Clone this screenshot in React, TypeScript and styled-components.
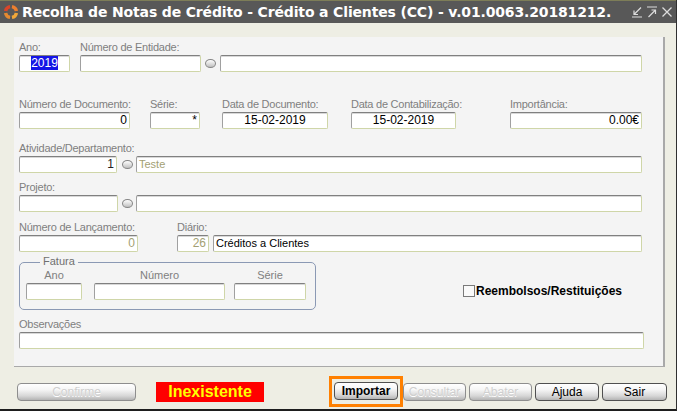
import React from 'react';
import styled, { createGlobalStyle } from 'styled-components';

const Global = createGlobalStyle`
  html, body { margin: 0; padding: 0; background: #ffffff; }
  body { font-family: "Liberation Sans", Arial, sans-serif; }
`;

const Window = styled.div`
  width: 677px;
  height: 411px;
  box-sizing: border-box;
  background: #eeeee4;
  border-right: 1px solid #303030;
  border-bottom: 2px solid #1e1e1e;
  display: flex;
  flex-direction: column;
  overflow: hidden;
`;

const TitleBar = styled.div`
  height: 23px;
  flex: none;
  box-sizing: border-box;
  background: #585858;
  border-top: 1px solid #7d7d58;
  display: flex;
  align-items: center;
  padding: 0 3px 0 3px;
`;

const TitleText = styled.div`
  font-family: "DejaVu Sans", Verdana, sans-serif;
  font-weight: bold;
  font-size: 14px;
  color: #ffffff;
  margin-left: 3px;
  white-space: nowrap;
  flex: 1;
  letter-spacing: -0.15px;
`;

const Controls = styled.div`
  display: flex;
  gap: 3px;
  align-items: center;
`;

const CtrlIcon = styled.svg`
  width: 12px;
  height: 12px;
  display: block;
`;

const Panel = styled.div`
  margin: 14px 0 0 14px;
  width: 651px;
  height: 330px;
  flex: none;
  box-sizing: border-box;
  background: #f4f4f4;
  border-right: 2px solid #a9a9a9;
  border-bottom: 1px solid #a9a9a9;
  padding: 4px 0 0 5px;
  display: flex;
  flex-direction: column;
`;

const Row = styled.div<{ $mt?: number }>`
  display: flex;
  align-items: flex-end;
  margin-top: ${(p) => p.$mt ?? 0}px;
`;

const Field = styled.div<{ $ml?: number }>`
  display: flex;
  flex-direction: column;
  margin-left: ${(p) => p.$ml ?? 0}px;
`;

const Label = styled.div`
  width: 0;
  height: 14px;
  line-height: 13px;
  font-size: 11px;
  color: #7f7f7f;
  letter-spacing: -0.25px;
  white-space: nowrap;
  overflow: visible;
`;

const Box = styled.div<{ $w: number; $align?: string; $color?: string; $ml?: number; $size?: number }>`
  width: ${(p) => p.$w}px;
  height: 17px;
  margin-left: ${(p) => p.$ml ?? 0}px;
  box-sizing: border-box;
  background: #ffffff;
  border: 1px solid;
  border-color: #808080 #cfd6a8 #cfd6a8 #a0a0a0;
  box-shadow: inset 0 1px 0 #d8d8d8;
  border-radius: 2px;
  font-size: ${(p) => p.$size ?? 11}px;
  line-height: 15px;
  padding: 0 2px;
  text-align: ${(p) => p.$align ?? 'left'};
  color: ${(p) => p.$color ?? '#000000'};
  overflow: hidden;
  white-space: nowrap;
  flex: none;
`;

const Selected = styled.span`
  background: #1414e6;
  color: #ffffff;
`;

const Lookup = styled.div<{ $ml: number; $mr: number }>`
  width: 11px;
  height: 9px;
  box-sizing: border-box;
  border-radius: 50%;
  border: 1px solid #858585;
  background: linear-gradient(to bottom, #ffffff, #c0c0c0);
  margin: 0 ${(p) => p.$mr}px 4px ${(p) => p.$ml}px;
  flex: none;
`;

const FaturaBox = styled.div`
  position: relative;
  width: 297px;
  height: 48px;
  box-sizing: border-box;
  border: 1px solid #8b99b4;
  border-radius: 5px;
  padding: 6px 0 0 6px;
  display: flex;
  align-self: flex-start;
  flex: none;
`;

const Legend = styled.div`
  position: absolute;
  left: 20px;
  top: -8px;
  padding: 0 3px;
  background: #f4f4f4;
  font-size: 11px;
  line-height: 13px;
  color: #707070;
`;

const FatCol = styled.div<{ $ml?: number }>`
  display: flex;
  flex-direction: column;
  align-items: center;
  margin-left: ${(p) => p.$ml ?? 0}px;
`;

const FatLabel = styled.div`
  height: 14px;
  line-height: 13px;
  font-size: 11px;
  color: #808080;
  text-align: center;
  white-space: nowrap;
`;

const CheckWrap = styled.div`
  display: flex;
  align-items: center;
  align-self: flex-start;
  margin: 22px 0 0 147px;
`;

const CheckBox = styled.div`
  width: 12px;
  height: 12px;
  box-sizing: border-box;
  border: 1px solid #7a7a7a;
  background: #fafafa;
  flex: none;
`;

const CheckText = styled.div`
  font-size: 12px;
  font-weight: bold;
  color: #000000;
  margin-left: 1px;
  white-space: nowrap;
`;

const ButtonRow = styled.div`
  display: flex;
  align-items: center;
  height: 31px;
  margin-top: 9px;
  padding-left: 17px;
`;

const Button = styled.div<{ $w: number; $ml?: number; $disabled?: boolean; $bold?: boolean }>`
  width: ${(p) => p.$w}px;
  height: 18px;
  margin-left: ${(p) => p.$ml ?? 0}px;
  box-sizing: border-box;
  flex: none;
  border: 1px solid ${(p) => (p.$disabled ? '#8e8e8e' : '#505050')};
  border-radius: 4px;
  background: linear-gradient(to bottom, #ffffff 0%, #f6f6f6 35%, #d6d6d6 75%, #b4b4b4 100%);
  font-size: 12px;
  line-height: 16px;
  text-align: center;
  font-weight: ${(p) => (p.$bold ? 'bold' : 'normal')};
  color: ${(p) => (p.$disabled ? '#cfcfcf' : '#000000')};
  text-shadow: ${(p) => (p.$disabled ? '0 1px 0 #ffffff' : 'none')};
`;

const Status = styled.div`
  width: 108px;
  height: 20px;
  margin-left: 20px;
  background: #ff0000;
  color: #ffff00;
  font-weight: bold;
  font-size: 16px;
  line-height: 20px;
  text-align: center;
  flex: none;
`;

const Highlight = styled.div`
  width: 74px;
  height: 31px;
  margin-left: 65px;
  box-sizing: border-box;
  border: 3px solid #ff8000;
  padding: 3px 2px 0 2px;
  flex: none;
`;

const AppIcon = () => (
  <svg width="16" height="16" viewBox="0 0 16 16" style={{ display: 'block', flex: 'none' }}>
    <g fill="none" strokeWidth="3.4" strokeLinecap="butt">
      <path d="M7.04 2.58 A5.5 5.5 0 0 0 2.58 7.04" stroke="#d9452a" />
      <path d="M8.96 2.58 A5.5 5.5 0 0 1 13.42 7.04" stroke="#ec7f2e" />
      <path d="M13.42 8.96 A5.5 5.5 0 0 1 8.96 13.42" stroke="#f1a83a" />
      <path d="M7.04 13.42 A5.5 5.5 0 0 1 2.58 8.96" stroke="#e58a30" />
    </g>
  </svg>
);

const G = '#dcdcdc';

export default function App() {
  return (
    <>
      <Global />
      <Window>
        <TitleBar>
          <AppIcon />
          <TitleText>Recolha de Notas de Crédito - Crédito a Clientes (CC) - v.01.0063.20181212.</TitleText>
          <Controls>
            <CtrlIcon viewBox="0 0 12 12">
              <path d="M10 1.5 L3 8.5 M3 4.5 V8.5 H7 M1 11 H11" stroke={G} strokeWidth="1.2" fill="none" />
            </CtrlIcon>
            <CtrlIcon viewBox="0 0 12 12">
              <path d="M1 1 H11 M2.5 11 L9.5 4 M5.5 4 H9.5 V8" stroke={G} strokeWidth="1.2" fill="none" />
            </CtrlIcon>
            <CtrlIcon viewBox="0 0 12 12">
              <path d="M1.5 1.5 L10.5 10.5 M10.5 1.5 L1.5 10.5" stroke={G} strokeWidth="1.3" fill="none" />
            </CtrlIcon>
          </Controls>
        </TitleBar>

        <Panel>
          <Row>
            <Field>
              <Label>Ano:</Label>
              <Box $w={51} $align="center" $size={12}>
                <Selected>2019</Selected>
              </Box>
            </Field>
            <Field $ml={10}>
              <Label>Número de Entidade:</Label>
              <Box $w={121} />
            </Field>
            <Lookup $ml={4} $mr={4} />
            <Box $w={422} />
          </Row>

          <Row $mt={26}>
            <Field>
              <Label>Número de Documento:</Label>
              <Box $w={111} $align="right" $size={12}>0</Box>
            </Field>
            <Field $ml={20}>
              <Label>Série:</Label>
              <Box $w={50} $align="right" $size={12}>*</Box>
            </Field>
            <Field $ml={22}>
              <Label>Data de Documento:</Label>
              <Box $w={106} $align="center" $size={12}>15-02-2019</Box>
            </Field>
            <Field $ml={23}>
              <Label>Data de Contabilização:</Label>
              <Box $w={105} $align="center" $size={12}>15-02-2019</Box>
            </Field>
            <Field $ml={54}>
              <Label>Importância:</Label>
              <Box $w={132} $align="right" $size={12}>0.00€</Box>
            </Field>
          </Row>

          <Row $mt={13}>
            <Field>
              <Label>Atividade/Departamento:</Label>
              <Box $w={98} $align="right" $size={12} $color="#222222">1</Box>
            </Field>
            <Lookup $ml={5} $mr={3} />
            <Box $w={506} $color="#a39f74">Teste</Box>
          </Row>

          <Row $mt={8}>
            <Field>
              <Label>Projeto:</Label>
              <Box $w={99} />
            </Field>
            <Lookup $ml={4} $mr={3} />
            <Box $w={506} />
          </Row>

          <Row $mt={9}>
            <Field>
              <Label>Número de Lançamento:</Label>
              <Box $w={119} $align="right" $size={12} $color="#a39f74">0</Box>
            </Field>
            <Field $ml={39}>
              <Label>Diário:</Label>
              <Box $w={32} $align="right" $size={12} $color="#a39f74">26</Box>
            </Field>
            <Box $w={429} $ml={4}>Créditos a Clientes</Box>
          </Row>

          <Row $mt={10}>
            <FaturaBox>
              <Legend>Fatura</Legend>
              <FatCol>
                <FatLabel>Ano</FatLabel>
                <Box $w={56} />
              </FatCol>
              <FatCol $ml={12}>
                <FatLabel>Número</FatLabel>
                <Box $w={131} />
              </FatCol>
              <FatCol $ml={9}>
                <FatLabel>Série</FatLabel>
                <Box $w={72} />
              </FatCol>
            </FaturaBox>
            <CheckWrap>
              <CheckBox />
              <CheckText>Reembolsos/Restituições</CheckText>
            </CheckWrap>
          </Row>

          <Row $mt={8}>
            <Field>
              <Label>Observações</Label>
              <Box $w={625} />
            </Field>
          </Row>
        </Panel>

        <ButtonRow>
          <Button $w={119} $disabled>Confirme</Button>
          <Status>Inexistente</Status>
          <Highlight>
            <Button $w={64} $bold>Importar</Button>
          </Highlight>
          <Button $w={63} $disabled>Consultar</Button>
          <Button $w={63} $ml={3} $disabled>Abater</Button>
          <Button $w={64} $ml={3}>Ajuda</Button>
          <Button $w={65} $ml={3}>Sair</Button>
        </ButtonRow>
      </Window>
    </>
  );
}
